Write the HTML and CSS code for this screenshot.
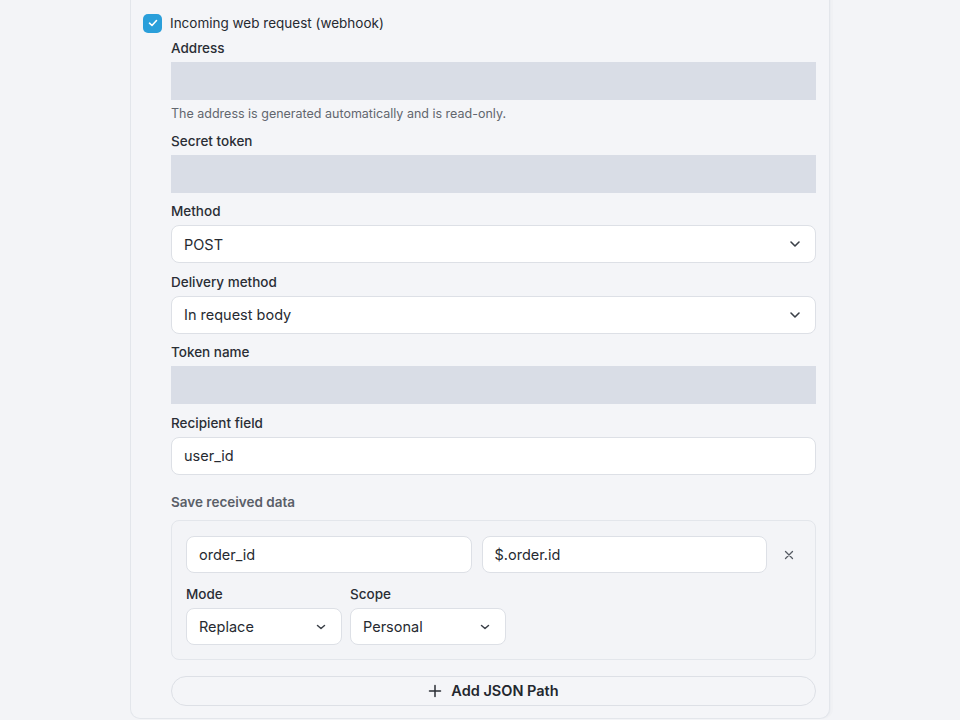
FILE: index.html
```html
<!DOCTYPE html>
<html lang="en">
<head>
<meta charset="utf-8">
<title>Webhook trigger</title>
<link rel="stylesheet" href="styles.css">
</head>
<body>
<div class="card">
  <label class="check-row">
    <span class="checkbox">
      <svg width="12" height="12" viewBox="0 0 12 12"><path d="M2.5 6.2 L5 8.5 L9.5 3.5" fill="none" stroke="#fff" stroke-width="1.6" stroke-linecap="round" stroke-linejoin="round"/></svg>
    </span>
    <span class="check-label">Incoming web request (webhook)</span>
  </label>

  <div class="fields">
    <div class="field">
      <div class="label">Address</div>
      <div class="input readonly"></div>
      <div class="help">The address is generated automatically and is read-only.</div>
    </div>

    <div class="field">
      <div class="label">Secret token</div>
      <div class="input readonly"></div>
    </div>

    <div class="field">
      <div class="label">Method</div>
      <div class="input select">
        <span>POST</span>
        <svg class="chev" width="12" height="8" viewBox="0 0 12 8"><path d="M2 2 L6 6 L10 2" fill="none" stroke="#3a3f47" stroke-width="1.6" stroke-linecap="round" stroke-linejoin="round"/></svg>
      </div>
    </div>

    <div class="field">
      <div class="label">Delivery method</div>
      <div class="input select">
        <span>In request body</span>
        <svg class="chev" width="12" height="8" viewBox="0 0 12 8"><path d="M2 2 L6 6 L10 2" fill="none" stroke="#3a3f47" stroke-width="1.6" stroke-linecap="round" stroke-linejoin="round"/></svg>
      </div>
    </div>

    <div class="field">
      <div class="label">Token name</div>
      <div class="input readonly"></div>
    </div>

    <div class="field">
      <div class="label">Recipient field</div>
      <div class="input"><span>user_id</span></div>
    </div>

    <div class="section-title">Save received data</div>

    <div class="panel">
      <div class="path-row">
        <div class="input small"><span>order_id</span></div>
        <div class="input small"><span>$.order.id</span></div>
        <button class="remove" type="button" aria-label="Remove">
          <svg width="10" height="10" viewBox="0 0 10 10"><path d="M1.5 1.5 L8.5 8.5 M8.5 1.5 L1.5 8.5" stroke="#555a63" stroke-width="1.3" stroke-linecap="round"/></svg>
        </button>
      </div>
      <div class="opt-row">
        <div class="opt">
          <div class="label">Mode</div>
          <div class="input select small">
            <span>Replace</span>
            <svg class="chev" width="12" height="8" viewBox="0 0 12 8"><path d="M2.5 2.5 L6 5.5 L9.5 2.5" fill="none" stroke="#3a3f47" stroke-width="1.5" stroke-linecap="round" stroke-linejoin="round"/></svg>
          </div>
        </div>
        <div class="opt">
          <div class="label">Scope</div>
          <div class="input select small">
            <span>Personal</span>
            <svg class="chev" width="12" height="8" viewBox="0 0 12 8"><path d="M2.5 2.5 L6 5.5 L9.5 2.5" fill="none" stroke="#3a3f47" stroke-width="1.5" stroke-linecap="round" stroke-linejoin="round"/></svg>
          </div>
        </div>
      </div>
    </div>

    <button class="add-btn" type="button">
      <svg width="14" height="14" viewBox="0 0 14 14"><path d="M7 1.5 V12.5 M1.5 7 H12.5" stroke="#2a2e35" stroke-width="1.5" stroke-linecap="round"/></svg>
      <span>Add JSON Path</span>
    </button>
  </div>
</div>
</body>
</html>
```

FILE: styles.css
```css
* {
  box-sizing: border-box;
}

html, body {
  margin: 0;
  padding: 0;
  background: #f3f4f7;
}

body {
  font-family: Inter, "Noto Sans", sans-serif;
  color: #23272e;
  font-size: 14px;
}

.card {
  width: 700px;
  margin: 0 auto;
  background: #f4f5f8;
  border: 1px solid #e3e6eb;
  border-top: none;
  border-radius: 0 0 10px 10px;
  box-shadow: 1px 0 0 #eceef2, 3px 0 0 #f0f1f4;
  padding: 12px 13px 12px 12px;
}

.check-row {
  display: flex;
  align-items: center;
  gap: 8px;
  height: 20px;
  margin-top: 1px;
}

.checkbox {
  width: 19px;
  height: 19px;
  border-radius: 5px;
  background: #2a9fda;
  display: flex;
  align-items: center;
  justify-content: center;
}

.check-label {
  font-size: 13.5px;
  line-height: 20px;
  color: #262a31;
}

.fields {
  margin-left: 28px;
  margin-top: 5px;
  display: flex;
  flex-direction: column;
  gap: 8.6px;
}

.field {
  display: flex;
  flex-direction: column;
  gap: 4px;
}

.label {
  font-size: 13.5px;
  line-height: 20px;
  font-weight: 500;
  color: #2a2e35;
}

.input {
  height: 38px;
  border: 1px solid #dde0e6;
  border-radius: 8px;
  background: #ffffff;
  display: flex;
  align-items: center;
  padding: 0 12px;
  font-size: 14.5px;
  color: #262a31;
}

.input.readonly {
  background: #d9dde6;
  border-color: #d9dde6;
  border-radius: 0;
}

.select {
  justify-content: space-between;
}

.chev {
  margin-right: 2px;
}

.help {
  font-size: 12.5px;
  line-height: 16px;
  color: #62666e;
  margin-top: 2px;
}

.section-title {
  font-size: 13.5px;
  line-height: 20px;
  font-weight: 600;
  color: #5a5f68;
  margin-top: 8px;
}

.panel {
  border: 1px solid #e3e6eb;
  border-radius: 8px;
  background: #f3f4f7;
  padding: 15px 14px 14px 14px;
  display: flex;
  flex-direction: column;
  gap: 11px;
}

.path-row {
  display: grid;
  grid-template-columns: 1fr 1fr 24px;
  gap: 10px;
  align-items: center;
}

.input.small {
  height: 37px;
}

.remove {
  border: none;
  background: transparent;
  padding: 0;
  width: 24px;
  height: 24px;
  display: flex;
  align-items: center;
  justify-content: center;
}

.opt-row {
  display: flex;
  gap: 8px;
}

.opt {
  width: 156px;
  display: flex;
  flex-direction: column;
  gap: 4px;
}

.add-btn {
  margin-top: 7px;
  height: 30px;
  border: 1px solid #dde0e6;
  border-radius: 15px;
  background: #f4f5f8;
  display: flex;
  align-items: center;
  justify-content: center;
  gap: 9px;
  font-family: Inter, "Noto Sans", sans-serif;
  font-size: 14.5px;
  font-weight: 600;
  color: #23272e;
}
```
